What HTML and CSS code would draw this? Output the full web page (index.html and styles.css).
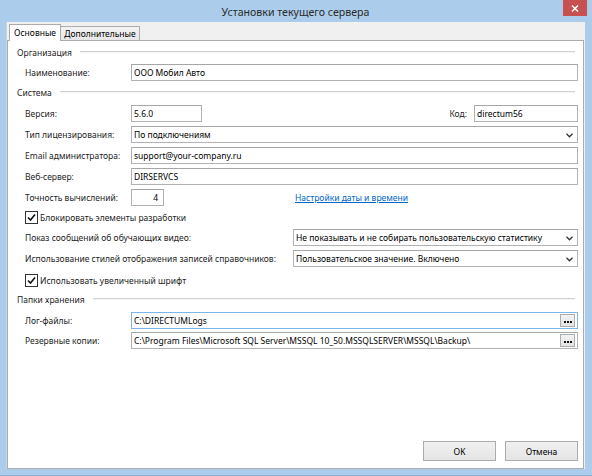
FILE: index.html
```html
<!DOCTYPE html>
<html>
<head>
<meta charset="utf-8">
<link rel="stylesheet" href="styles.css">
</head>
<body>
<div class="window">
  <div class="titlebar">
    <span class="title">Установки текущего сервера</span>
    <div class="close"><svg width="8" height="7" viewBox="0 0 8 7"><path d="M1 0.5 L7 6.5 M7 0.5 L1 6.5" stroke="#fff" stroke-width="1.5"/></svg></div>
  </div>
  <div class="client">
    <div class="tabs">
      <div class="tab active">Основные</div>
      <div class="tab">Дополнительные</div>
    </div>
    <div class="panel">
      <div class="group g1"><span>Организация</span><i></i></div>
      <div class="row m4"><label>Наименование:</label><div class="input grow">ООО Мобил Авто</div></div>

      <div class="group m3"><span>Система</span><i></i></div>
      <div class="row m5">
        <label>Версия:</label><div class="input w71">5.6.0</div>
        <span class="spacer"></span>
        <label class="kod">Код:</label><div class="input w104">directum56</div>
      </div>
      <div class="row m4"><label>Тип лицензирования:</label><div class="input grow select">По подключениям<svg class="chev" width="7" height="5" viewBox="0 0 7 5"><path d="M0.5 0.8 L3.5 3.8 L6.5 0.8" fill="none" stroke="#333" stroke-width="1.3"/></svg></div></div>
      <div class="row m4"><label>Email администратора:</label><div class="input grow">support@your-company.ru</div></div>
      <div class="row m4"><label>Веб-сервер:</label><div class="input grow">DIRSERVCS</div></div>
      <div class="row m4"><label>Точность вычислений:</label><div class="input w33 num">4</div><span class="gap-link"></span><a class="link">Настройки даты и времени</a></div>

      <div class="check m3"><span class="box"><svg width="9" height="9" viewBox="0 0 9 9"><path d="M1 4.5 L3.5 7 L8 1.5" fill="none" stroke="#111" stroke-width="1.6"/></svg></span>Блокировать элементы разработки</div>
      <div class="row m4"><label class="wide">Показ сообщений об обучающих видео:</label><div class="input grow select">Не показывать и не собирать пользовательскую статистику<svg class="chev" width="7" height="5" viewBox="0 0 7 5"><path d="M0.5 0.8 L3.5 3.8 L6.5 0.8" fill="none" stroke="#333" stroke-width="1.3"/></svg></div></div>
      <div class="row m4"><label class="wide">Использование стилей отображения записей справочников:</label><div class="input grow select">Пользовательское значение. Включено<svg class="chev" width="7" height="5" viewBox="0 0 7 5"><path d="M0.5 0.8 L3.5 3.8 L6.5 0.8" fill="none" stroke="#333" stroke-width="1.3"/></svg></div></div>
      <div class="check m5"><span class="box"><svg width="9" height="9" viewBox="0 0 9 9"><path d="M1 4.5 L3.5 7 L8 1.5" fill="none" stroke="#111" stroke-width="1.6"/></svg></span>Использовать увеличенный шрифт</div>

      <div class="group m3"><span>Папки хранения</span><i></i></div>
      <div class="row m5"><label>Лог-файлы:</label><div class="input grow focus">C:\DIRECTUMLogs<span class="dots"><b></b><b></b><b></b></span></div></div>
      <div class="row m3"><label>Резервные копии:</label><div class="input grow">C:\Program Files\Microsoft SQL Server\MSSQL 10_50.MSSQLSERVER\MSSQL\Backup\<span class="dots"><b></b><b></b><b></b></span></div></div>

      <div class="buttons">
        <div class="btn">OK</div>
        <div class="btn">Отмена</div>
      </div>
    </div>
  </div>
</div>
</body>
</html>
```
FILE: styles.css
```css
html, body {
  margin: 0;
  padding: 0;
}
body {
  width: 592px;
  height: 476px;
  overflow: hidden;
  font-family: "Noto Sans", "Open Sans", sans-serif;
  font-size: 8.5px;
  color: #000;
}
.window {
  width: 592px;
  height: 476px;
  box-sizing: border-box;
  background: #abcdeb;
  border-bottom: 1px solid #8fb0d0;
  display: flex;
  flex-direction: column;
  padding: 0 7px 6px 6px;
}
.titlebar {
  height: 22px;
  position: relative;
  display: flex;
  align-items: center;
  justify-content: center;
}
.title {
  font-size: 10.6px;
  color: #2a2a2a;
  margin-top: 1px;
}
.close {
  position: absolute;
  right: -2px;
  top: 0;
  width: 24px;
  height: 16px;
  background: #c75050;
  display: flex;
  align-items: center;
  justify-content: center;
}
.client {
  flex: 1;
  background: #f0f0f0;
  display: flex;
  flex-direction: column;
  border-left: 1px solid #c8d6e4;
}
.tabs {
  height: 18px;
  display: flex;
  align-items: flex-end;
  padding-left: 2px;
  position: relative;
  z-index: 1;
}
.tab {
  height: 14px;
  line-height: 13px;
  padding: 0 3px;
  border: 1px solid #acacac;
  border-bottom: none;
  background: linear-gradient(#f3f3f3, #e7e7e7);
  box-sizing: border-box;
  color: #000;
  text-align: center;
}
.tab.active {
  height: 17px;
  line-height: 15px;
  background: #fff;
  margin-bottom: -1px;
  width: 52px;
}
.tab + .tab {
  border-left: none;
  width: 79px;
}
.panel {
  flex: 1;
  background: #fff;
  border: 1px solid #acacac;
  margin-right: 1px;
  display: flex;
  flex-direction: column;
  padding: 0 5px 7px 0;
}
.group {
  height: 16px;
  display: flex;
  align-items: center;
  padding-left: 9px;
  color: #1e1e1e;
  margin-right: 3px;
}
.group.g1 { margin-top: 3px; }
.group span { margin-right: 8px; }
.group i {
  flex: 1;
  height: 0;
  border-top: 1px solid #d0d0d0;
  border-bottom: 1px solid #f4f4f4;
}
.m3 { margin-top: 3px; }
.m4 { margin-top: 4px; }
.m5 { margin-top: 5px; }
.row {
  height: 17px;
  display: flex;
  align-items: center;
  padding-left: 17px;
}
.row label {
  width: 106px;
  flex: none;
  color: #1e1e1e;
}
.row label.wide { width: 268px; }
.row label.kod { width: auto; margin-right: 7px; }
.spacer { flex: 1; }
.input {
  height: 17px;
  box-sizing: border-box;
  border: 1px solid #b2b2b2;
  border-top-color: #a6a6a6;
  display: flex;
  align-items: center;
  padding-left: 2px;
  white-space: nowrap;
  overflow: hidden;
  position: relative;
  color: #000;
  background: #fff;
}
.grow { flex: 1; }
.w71 { width: 71px; }
.w104 { width: 104px; }
.w33 { width: 33px; justify-content: flex-end; padding-right: 5px; }
.select { padding-right: 20px; }
.chev {
  position: absolute;
  right: 4px;
  top: 6px;
}
.focus { border-color: #7eb4ea; }
.gap-link { width: 131px; flex: none; }
.link {
  color: #0066cc;
  text-decoration: underline;
}
.check {
  height: 16px;
  display: flex;
  align-items: center;
  padding-left: 17px;
  color: #1e1e1e;
}
.box {
  width: 11px;
  height: 11px;
  border: 1px solid #333;
  background: #fff;
  margin-right: 2px;
  display: flex;
  align-items: center;
  justify-content: center;
  flex: none;
}
.dots {
  position: absolute;
  right: 2px;
  top: 1px;
  width: 13px;
  height: 8px;
  border: 1px solid #adadad;
  background: linear-gradient(#f2f2f2, #e3e3e3);
  display: flex;
  align-items: flex-end;
  justify-content: center;
  gap: 1px;
  padding-bottom: 3px;
  box-sizing: content-box;
}
.dots b {
  width: 2px;
  height: 2px;
  background: #111;
}
.buttons {
  margin-top: auto;
  display: flex;
  justify-content: flex-end;
  gap: 9px;
}
.btn {
  width: 71px;
  height: 18px;
  border: 1px solid #acacac;
  background: linear-gradient(#f0f0f0, #e5e5e5);
  display: flex;
  align-items: center;
  justify-content: center;
  color: #000;
}
```
